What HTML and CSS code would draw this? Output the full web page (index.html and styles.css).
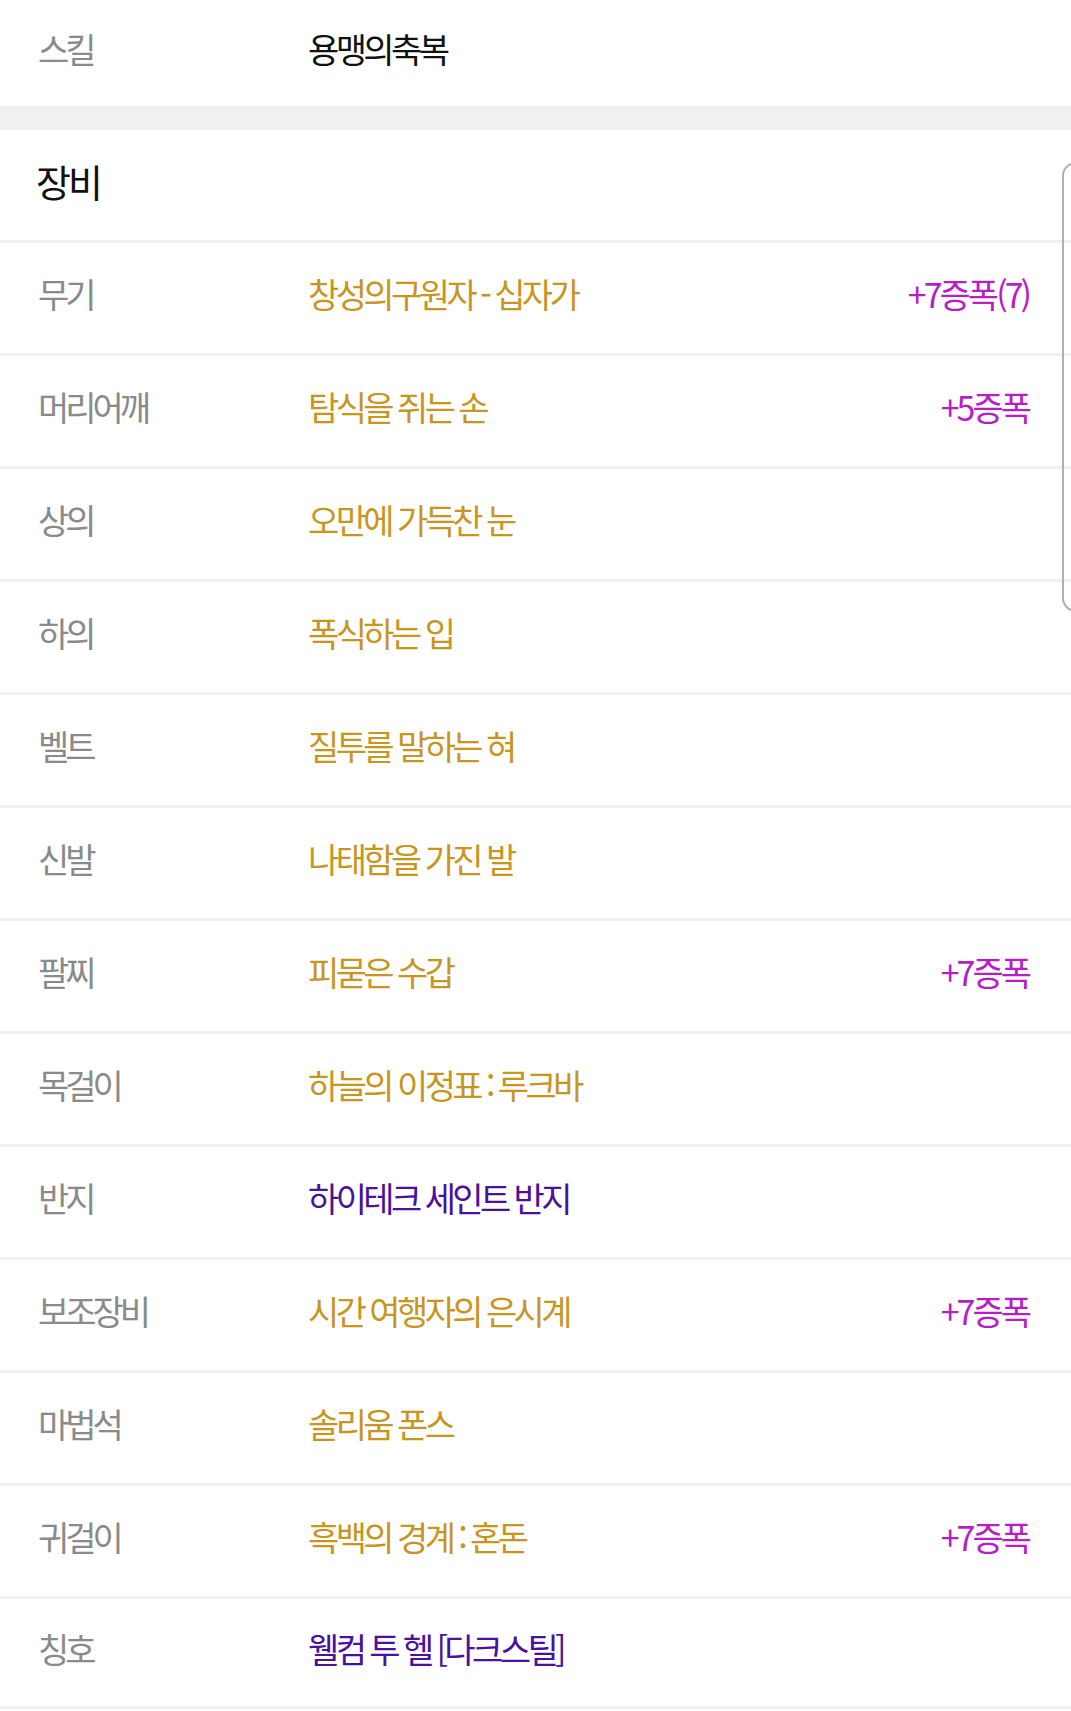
FILE: index.html
```html
<!DOCTYPE html>
<html lang="ko">

<head>
    <meta charset="UTF-8" />
    <meta name="viewport" content="width=device-width, initial-scale=1.0" />
    <title>장비</title>
    <link rel="stylesheet" href="styles.css">
</head>

<body>

    <div class="skill-row">
        <span class="label">스킬</span>
        <span class="value plain">용맹의축복</span>
    </div>

    <div class="gap"></div>

    <div class="section">
        <h2>장비</h2>

        <div class="row">
            <span class="label">무기</span>
            <span class="value gold">창성의구원자 - 십자가</span>
            <span class="star">+7증폭(7)</span>
        </div>
        <div class="row">
            <span class="label">머리어깨</span>
            <span class="value gold">탐식을 쥐는 손</span>
            <span class="star">+5증폭</span>
        </div>
        <div class="row">
            <span class="label">상의</span>
            <span class="value gold">오만에 가득찬 눈</span>
        </div>
        <div class="row">
            <span class="label">하의</span>
            <span class="value gold">폭식하는 입</span>
        </div>
        <div class="row">
            <span class="label">벨트</span>
            <span class="value gold">질투를 말하는 혀</span>
        </div>
        <div class="row">
            <span class="label">신발</span>
            <span class="value gold">나태함을 가진 발</span>
        </div>
        <div class="row">
            <span class="label">팔찌</span>
            <span class="value gold">피묻은 수갑</span>
            <span class="star">+7증폭</span>
        </div>
        <div class="row">
            <span class="label">목걸이</span>
            <span class="value gold">하늘의 이정표 : 루크바</span>
        </div>
        <div class="row">
            <span class="label">반지</span>
            <span class="value purple">하이테크 세인트 반지</span>
        </div>
        <div class="row">
            <span class="label">보조장비</span>
            <span class="value gold">시간 여행자의 은시계</span>
            <span class="star">+7증폭</span>
        </div>
        <div class="row">
            <span class="label">마법석</span>
            <span class="value gold">솔리움 폰스</span>
        </div>
        <div class="row">
            <span class="label">귀걸이</span>
            <span class="value gold">흑백의 경계 : 혼돈</span>
            <span class="star">+7증폭</span>
        </div>
        <div class="row">
            <span class="label">칭호</span>
            <span class="value purple">웰컴 투 헬 [다크스틸]</span>
        </div>
    </div>

    <div class="scroll-thumb"></div>

</body>

</html>
```

FILE: styles.css
```css
* {
    box-sizing: border-box;
}

body {
    margin: 0;
    padding: 0;
    background-color: #fff;
    font-family: "Noto Sans CJK KR", "Noto Sans", sans-serif;
    position: relative;
    overflow: hidden;
}

.skill-row,
.row {
    display: flex;
    align-items: center;
    padding: 0 38px 9px;
    font-size: 34px;
    letter-spacing: -4px;
}

.skill-row {
    height: 106px;
}

.row {
    height: 113px;
    border-top: 3px solid #f0f0f0;
}

.row:last-child {
    border-bottom: 3px solid #f0f0f0;
}

.gap {
    height: 24px;
    background-color: #f0f0f0;
}

h2 {
    margin: 0;
    height: 110px;
    display: flex;
    align-items: center;
    padding: 0 36px 10px;
    font-size: 38px;
    font-weight: 400;
    letter-spacing: -3px;
    color: #111;
}

.label {
    width: 270px;
    flex-shrink: 0;
    color: #8a8a8a;
}

.value {
    flex: 1;
    letter-spacing: -3.6px;
    word-spacing: 0;
}

.plain {
    color: #111;
}

.gold {
    color: #c8951f;
}

.purple {
    color: #4a109e;
}

.star {
    color: #b81ec6;
    letter-spacing: -3px;
    margin-right: 4px;
}

.scroll-thumb {
    position: absolute;
    top: 162px;
    left: 1062px;
    width: 40px;
    height: 450px;
    border: 2px solid #b0b0b0;
    border-radius: 14px;
}
```
